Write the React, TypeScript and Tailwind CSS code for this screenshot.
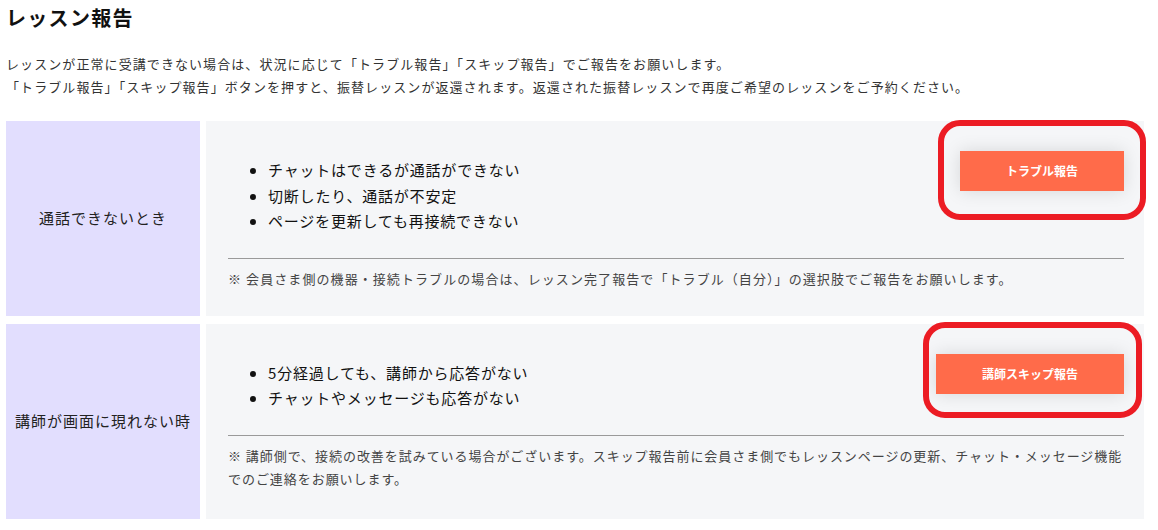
import React from "react";

type Row = {
  label: string;
  items: string[];
  button: string;
  note: React.ReactNode;
  noteTracking: string;
  pb: string;
  frame: string;
};

const rows: Row[] = [
  {
    label: "通話できないとき",
    items: [
      "チャットはできるが通話ができない",
      "切断したり、通話が不安定",
      "ページを更新しても再接続できない",
    ],
    button: "トラブル報告",
    note: "※ 会員さま側の機器・接続トラブルの場合は、レッスン完了報告で「トラブル（自分）」の選択肢でご報告をお願いします。",
    noteTracking: "tracking-[1.08px]",
    pb: "pb-[26px]",
    frame: "-left-[22px] -right-[22px] -top-[31px] -bottom-[29px]",
  },
  {
    label: "講師が画面に現れない時",
    items: ["5分経過しても、講師から応答がない", "チャットやメッセージも応答がない"],
    button: "講師スキップ報告",
    note: (
      <>
        <span className="whitespace-nowrap">
          ※ 講師側で、接続の改善を試みている場合がございます。スキップ報告前に会員さま側でもレッスンページの更新、チャット・メッセージ機能
        </span>
        <br />
        でのご連絡をお願いします。
      </>
    ),
    noteTracking: "tracking-[0.95px]",
    pb: "pb-[29px]",
    frame: "-left-[13px] -right-[18px] -top-[32px] -bottom-[24px]",
  },
];

export default function App() {
  return (
    <div className="w-[1158px] h-[530px] overflow-hidden bg-white px-[6px] font-['Noto_Sans_CJK_JP',sans-serif] text-[#222]">
      <h1 className="pt-[4px] text-[20px] font-bold leading-[28px] tracking-[1.3px] text-[#111]">
        レッスン報告
      </h1>
      <p className="mt-[20px] text-[13px] leading-[23px] tracking-[1.08px] text-[#333]">
        レッスンが正常に受講できない場合は、状況に応じて「トラブル報告」「スキップ報告」でご報告をお願いします。
        <br />
        「トラブル報告」「スキップ報告」ボタンを押すと、振替レッスンが返還されます。返還された振替レッスンで再度ご希望のレッスンをご予約ください。
      </p>
      <div className="mt-[23px] flex flex-col gap-[8px]">
        {rows.map((r) => (
          <div key={r.label} className="flex gap-[6px]">
            <div className="flex w-[194px] shrink-0 items-center justify-center bg-[#e2defe] text-[15px] tracking-[1px] text-[#222]">
              {r.label}
            </div>
            <div className={`w-[938px] bg-[#f5f6f8] pl-[22px] pr-[20px] pt-[30px] ${r.pb}`}>
              <div className="flex items-start justify-between">
                <ul className="list-disc pl-[40px] pt-[6px] text-[15px] leading-[25.5px] tracking-[0.8px] text-[#111]">
                  {r.items.map((it) => (
                    <li key={it}>{it}</li>
                  ))}
                </ul>
                <div className="relative">
                  <div className="flex h-[40px] items-center justify-center bg-[#ff6b4a] px-[46px] text-[12px] font-bold text-white shadow-[0_0_18px_rgba(0,0,0,0.13)]">
                    {r.button}
                  </div>
                  <div
                    className={`pointer-events-none absolute rounded-[22px] border-[6px] border-[#ec1c24] ${r.frame}`}
                  />
                </div>
              </div>
              <div className="mt-[24px] h-px bg-[#9a9a9a]" />
              <p className={`mt-[8px] text-[13px] leading-[23px] text-[#444] ${r.noteTracking}`}>
                {r.note}
              </p>
            </div>
          </div>
        ))}
      </div>
    </div>
  );
}
